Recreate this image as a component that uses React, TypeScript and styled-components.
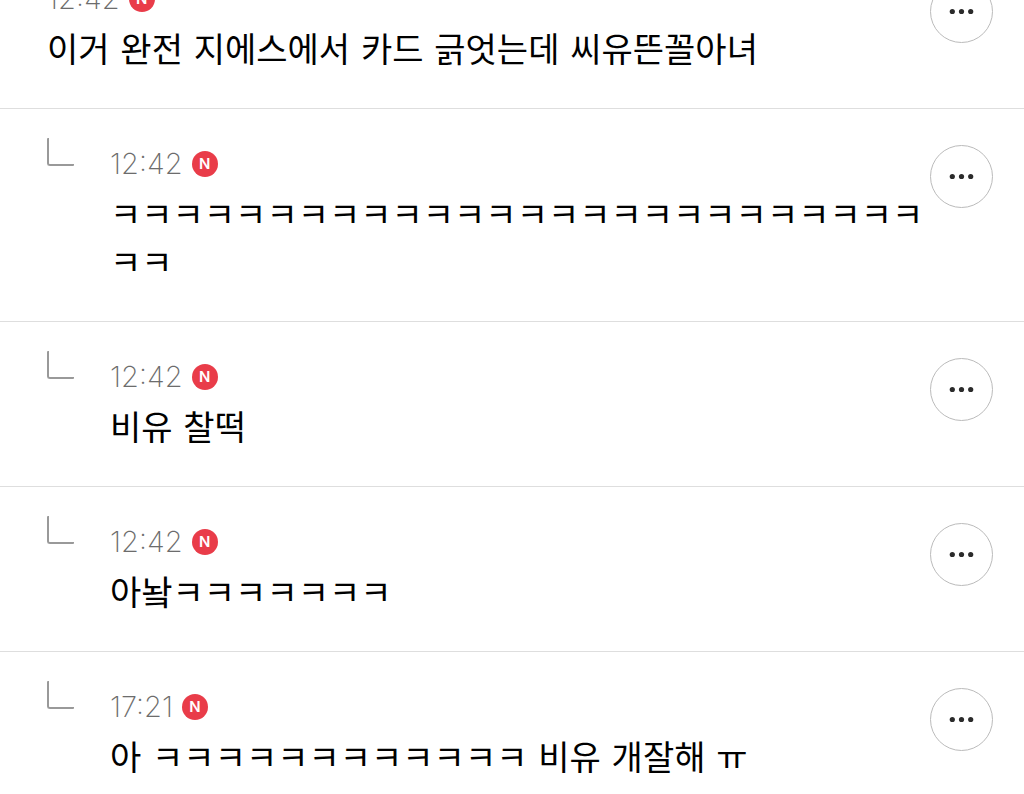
import React from 'react';
import styled, { createGlobalStyle } from 'styled-components';

const GlobalStyle = createGlobalStyle`
  * { box-sizing: border-box; }
  html, body { margin: 0; background: #fff; overflow: hidden; }
`;

const List = styled.ul`
  margin: 0;
  padding: 0;
  height: 100vh;
  overflow: hidden;
  list-style: none;
  background: #fff;
  color: #000;
  font-family: Inter, "Noto Sans CJK KR", sans-serif;
`;

const Item = styled.li<{ $scrolled: boolean }>`
  display: flex;
  align-items: flex-start;
  margin-top: ${p => (p.$scrolled ? '-56px' : '0')};
  padding: 36px 31px 34px 47px;
  border-bottom: 1px solid #dedede;
`;

const Branch = styled.span`
  flex: none;
  width: 27px;
  height: 28px;
  margin: -7px 36px 0 0;
  border-left: 2px solid #999;
  border-bottom: 2px solid #999;
  border-radius: 1px 1px 1px 3px;
`;

const Body = styled.div`
  flex: 1;
  min-width: 0;
`;

const Meta = styled.div`
  display: flex;
  align-items: center;
  gap: 9px;
  height: 38px;
`;

const Time = styled.time`
  color: #6c6c6c;
  font-size: 29px;
  font-weight: 200;
  line-height: 38px;
`;

const Badge = styled.span`
  display: grid;
  place-items: center;
  width: 26px;
  height: 26px;
  border-radius: 50%;
  background: #e93c49;
  color: #fff;
  font-size: 15px;
  font-weight: 600;
  line-height: 26px;
`;

const Message = styled.p`
  margin: 8px 0 0;
  font-family: "DejaVu Sans", "Noto Sans CJK KR", sans-serif;
  font-size: 34px;
  line-height: 48px;
  word-break: break-all;
`;

const MoreButton = styled.button`
  flex: none;
  display: grid;
  place-items: center;
  width: 63px;
  height: 63px;
  padding: 0;
  border: 1px solid #bbb;
  border-radius: 50%;
  background: #fff;
`;

const Dots = () => (
  <svg width="25" height="7" viewBox="0 0 25 7" aria-hidden="true">
    <circle cx="3.3" cy="3.5" r="2.6" fill="#2b2b2b" />
    <circle cx="12.5" cy="3.5" r="2.6" fill="#2b2b2b" />
    <circle cx="21.7" cy="3.5" r="2.6" fill="#2b2b2b" />
  </svg>
);

const comments = [
  { time: '12:42', text: '이거 완전 지에스에서 카드 긁엇는데 씨유뜬꼴아녀', reply: false },
  { time: '12:42', text: 'ㅋ'.repeat(28), reply: true },
  { time: '12:42', text: '비유 찰떡', reply: true },
  { time: '12:42', text: '아놬ㅋㅋㅋㅋㅋㅋㅋ', reply: true },
  { time: '17:21', text: '아 ㅋㅋㅋㅋㅋㅋㅋㅋㅋㅋㅋㅋ 비유 개잘해 ㅠ', reply: true },
];

export default function App() {
  return (
    <>
      <GlobalStyle />
      <List>
        {comments.map((c, i) => (
          <Item key={i} $scrolled={i === 0}>
            {c.reply && <Branch />}
            <Body>
              <Meta>
                <Time>{c.time}</Time>
                <Badge>N</Badge>
              </Meta>
              <Message>{c.text}</Message>
            </Body>
            <MoreButton type="button" aria-label="More options"><Dots /></MoreButton>
          </Item>
        ))}
      </List>
    </>
  );
}
